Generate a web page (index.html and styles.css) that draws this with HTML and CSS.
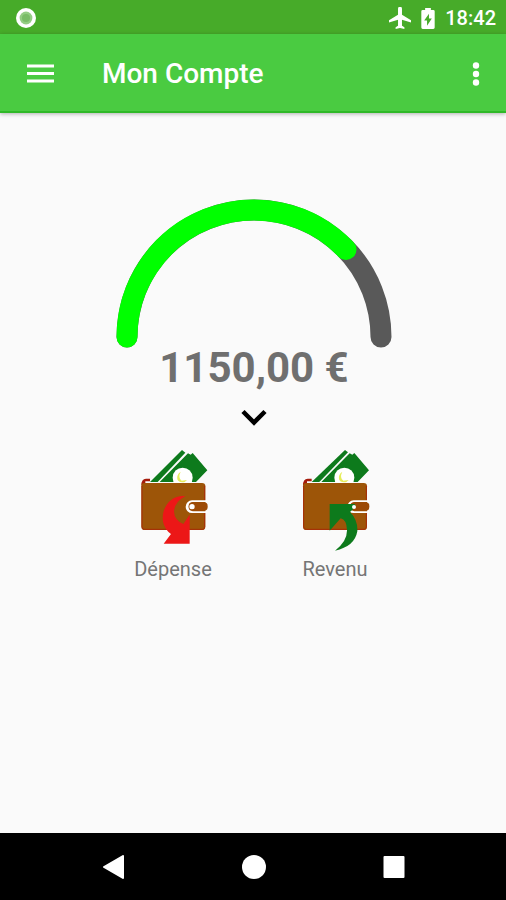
FILE: index.html
```html
<!DOCTYPE html>
<html lang="fr">
<head>
<meta charset="utf-8">
<meta name="viewport" content="width=device-width, initial-scale=1">
<title>Mon Compte</title>
<link rel="stylesheet" href="styles.css">
</head>
<body>
<div class="status">
  <svg class="status-ring" viewBox="0 0 20 20" aria-hidden="true"><circle cx="10" cy="10" r="10" fill="#fff"/><circle cx="10" cy="10" r="6.4" fill="#93cd83"/><circle cx="10" cy="10" r="4" fill="#79bc67"/></svg>
  <div class="status-right">
    <svg class="status-plane" viewBox="2 2 20 20" aria-hidden="true"><path fill="#fff" d="M10.2 9V3.5a1.8 1.8 0 0 1 3.6 0V9L22 14v2l-8.2-2.5V19l2.2 1.5V22l-4-1-4 1v-1.500l2.200-1.500v-5.500L2 16v-2z"/></svg>
    <svg class="status-battery" viewBox="0 0 14 22" aria-hidden="true"><path fill="#fff" d="M4 0h6v2h2.500q1.500 0 1.500 1.500v17q0 1.500-1.500 1.500h-11Q0 22 0 20.500v-17Q0 2 1.500 2H4z"/><path fill="#47ab29" d="M8 6v5h3l-5 7.500V13H3z"/></svg>
    <time class="clock">18:42</time>
  </div>
</div>
<header class="appbar">
  <button class="icon-btn" type="button" aria-label="Menu"><svg class="menu-icon" viewBox="0 0 27 20"><path stroke="#fff" stroke-width="3" d="M0 2h27M0 9.500h27M0 17h27"/></svg></button>
  <h1 class="title">Mon Compte</h1>
  <button class="icon-btn" type="button" aria-label="Options"><svg class="more-icon" viewBox="0 0 8 24"><g fill="#fff"><circle cx="4" cy="3.500" r="3.200"/><circle cx="4" cy="12" r="3.200"/><circle cx="4" cy="20.500" r="3.200"/></g></svg></button>
</header>
<main class="content">
  <svg class="gauge" viewBox="0 0 276 150" role="img" aria-label="Solde"><g fill="none" stroke-width="21" stroke-linecap="round"><path stroke="#595959" d="M11 138a127 127 0 0 1 254 0"/><path stroke="#0f0" d="M11 138A127 127 0 0 1 230 50.500"/></g></svg>
  <p class="balance">1150,00 €</p>
  <button class="expand" type="button" aria-label="Détails"><svg class="chevron" viewBox="0 0 26 17"><path fill="none" stroke="#000" stroke-width="4.500" d="M2 2.500l11 11 11-11"/></svg></button>
  <div class="actions">
    <button class="action" type="button">
      <svg class="wallet" viewBox="35 24 216 312" aria-hidden="true">
        <path fill="#0d7a1c" d="M74 126L170 30L180 38L97 126z"/>
        <path fill="#0d7a1c" d="M103 126L188 40L196 44L202 39L246 91L212 126z"/>
        <circle cx="172" cy="113" r="30" fill="#fff"/>
        <path fill="#e6ed5b" d="M166 95q-9 18 3 27l16-2-7 6q-18 3-22-8-3-14 10-23z"/>
        <path fill="#a51b0b" d="M48 136q0-20 14-20h12v8H60v12z"/>
        <rect x="48" y="129" width="192" height="141" rx="10" fill="#9d5508"/>
        <path fill="none" stroke="#a82b08" stroke-width="3" d="M50 137v123q0 8 8 8h173q7 0 7-8v-42M238 181v-44"/>
        <path fill="#fff" d="M246 181h-46a18 18 0 0 0 0 38h46v-5h-44q-12-3-12-14t12-14h44z"/>
        <rect x="190" y="187" width="57" height="25" rx="11" fill="#9d4a05"/>
        <circle cx="200" cy="200" r="8" fill="#fff"/>
        <path fill="#ec1717" d="M180 168C135 164 107 204 113 245Q118 268 137 282L115 311H193V224L174 252Q147 240 146 215Q147 186 180 168z"/>
      </svg>
      <span class="label">Dépense</span>
    </button>
    <button class="action" type="button">
      <svg class="wallet" viewBox="41 24 216 312" aria-hidden="true">
        <g transform="translate(5 0)">
          <path fill="#0d7a1c" d="M74 126L174 30L183 37L97 126z"/>
          <path fill="#0d7a1c" d="M103 126L188 40L196 44L202 39L246 91L212 126z"/>
          <circle cx="172" cy="113" r="30" fill="#fff"/>
          <path fill="#e6ed5b" d="M166 95q-9 18 3 27l16-2-7 6q-18 3-22-8-3-14 10-23z"/>
          <path fill="#a51b0b" d="M48 136q0-20 14-20h12v8H60v12z"/>
          <rect x="48" y="129" width="192" height="141" rx="10" fill="#9d5508"/>
          <path fill="none" stroke="#a82b08" stroke-width="3" d="M50 137v123q0 8 8 8h173q7 0 7-8v-42M238 181v-44"/>
          <path fill="#fff" d="M246 181h-46a18 18 0 0 0 0 38h46v-5h-44q-12-3-12-14t12-14h44z"/>
          <rect x="190" y="187" width="57" height="25" rx="11" fill="#9d4a05"/>
        </g>
        <path fill="#0d7a1c" d="M133 192H208L212 200L194 216Q218 240 216 274Q208 320 149 332Q186 304 185 270Q184 239 166 235L133 272z"/>
        <circle cx="206" cy="201" r="6" fill="#fff"/>
      </svg>
      <span class="label">Revenu</span>
    </button>
  </div>
</main>
<nav class="navbar" aria-label="Système">
  <button class="nav-btn" type="button" aria-label="Retour"><svg class="nav-icon" viewBox="0 0 24 24"><path fill="#fff" stroke="#fff" stroke-width="2" stroke-linejoin="round" d="M2 12L21 1v22z"/></svg></button>
  <button class="nav-btn" type="button" aria-label="Accueil"><svg class="nav-icon" viewBox="0 0 24 24"><circle cx="12" cy="12" r="12" fill="#fff"/></svg></button>
  <button class="nav-btn" type="button" aria-label="Applications"><svg class="nav-icon" viewBox="0 0 24 24"><rect x="1.500" y="1" width="21" height="22" rx="1" fill="#fff"/></svg></button>
</nav>
</body>
</html>
```
FILE: styles.css
```css
* { box-sizing: border-box; }
body {
  margin: 0;
  min-height: 100vh;
  display: flex;
  flex-direction: column;
  background: #fafafa;
  font-family: Roboto, "Liberation Sans", sans-serif;
}
button {
  border: 0;
  padding: 0;
  background: none;
  color: inherit;
  font: inherit;
  cursor: pointer;
}
svg { display: block; }
.status {
  height: 34px;
  padding: 2px 10px 0 16px;
  display: flex;
  align-items: center;
  justify-content: space-between;
  background: #47ab29;
  color: #fff;
}
.status-right { display: flex; align-items: center; }
.status-ring { width: 20px; height: 20px; }
.status-plane { width: 22px; height: 22px; margin-right: 10px; }
.status-battery { width: 14px; height: 21px; margin-right: 10px; }
.clock { font-size: 20px; font-weight: 500; line-height: 24px; }
.appbar {
  height: 79px;
  padding: 2px 10px 0 20px;
  display: flex;
  align-items: center;
  background: #4acb41;
  border-bottom: 2px solid #2fb927;
  box-shadow: 0 1px 4px rgba(0, 0, 0, 0.3);
  color: #fff;
}
.icon-btn {
  width: 40px;
  height: 48px;
  display: grid;
  place-items: center;
}
.menu-icon { width: 27px; height: 20px; }
.more-icon { width: 8px; height: 24px; }
.title {
  flex: 1;
  margin: 0 0 0 42px;
  font-size: 28px;
  font-weight: 500;
  line-height: 32px;
}
.content {
  flex: 1;
  padding: 86px 0 0 2px;
  display: flex;
  flex-direction: column;
  align-items: center;
}
.gauge { width: 276px; height: 150px; }
.balance {
  margin: 0;
  color: #6f6f6f;
  font-size: 42px;
  font-weight: 700;
  line-height: 38px;
}
.expand {
  width: 48px;
  height: 48px;
  margin-top: 6px;
  display: grid;
  place-items: center;
}
.chevron { width: 26px; height: 17px; }
.actions {
  margin-top: 7px;
  display: grid;
  grid-template-columns: repeat(2, 162px);
}
.action {
  display: flex;
  flex-direction: column;
  align-items: center;
  gap: 5px;
}
.wallet { width: 72px; height: 104px; }
.label { color: #757575; font-size: 20px; line-height: 24px; }
.navbar {
  height: 67px;
  padding-left: 2px;
  display: flex;
  align-items: center;
  justify-content: center;
  gap: 92px;
  background: #000;
}
.nav-btn {
  width: 48px;
  height: 48px;
  display: grid;
  place-items: center;
}
.nav-icon { width: 24px; height: 24px; }
```
